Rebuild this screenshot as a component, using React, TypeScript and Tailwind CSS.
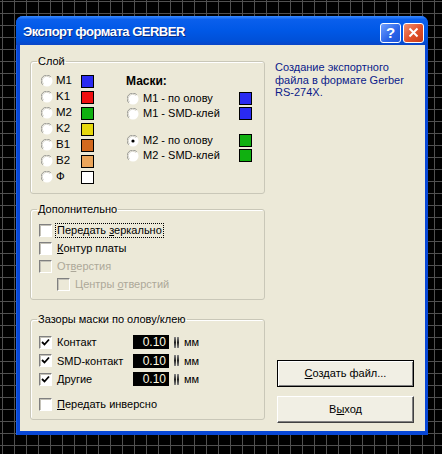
import type { ReactNode } from 'react';

const FONT = "font-['Liberation_Sans',Arial,sans-serif]";

const LAYERS = [
  { name: 'M1', color: 'bg-[#2a2af2]' },
  { name: 'K1', color: 'bg-[#f01010]' },
  { name: 'M2', color: 'bg-[#10b010]' },
  { name: 'K2', color: 'bg-[#e6d80c]' },
  { name: 'B1', color: 'bg-[#d2691e]' },
  { name: 'B2', color: 'bg-[#eba55a]' },
  { name: 'Ф', color: 'bg-white' },
];

const CLEARANCES = ['Контакт', 'SMD-контакт', 'Другие'];

function Radio({ checked = false }: { checked?: boolean }) {
  return (
    <svg width="12" height="12" viewBox="0 0 12 12" className="shrink-0">
      <circle cx="6" cy="6" r="5.5" fill="#ffffff" />
      <path d="M1.8 9.8 A5.2 5.2 0 0 1 9.8 1.8" stroke="#9a9a94" strokeWidth="1" fill="none" />
      <path d="M2.6 8.8 A4.2 4.2 0 0 1 8.8 2.6" stroke="#d8d6cc" strokeWidth="1" fill="none" />
      {checked && <circle cx="6" cy="6" r="1.6" fill="#000000" />}
    </svg>
  );
}

function Checkbox({ checked = false, disabled = false }: { checked?: boolean; disabled?: boolean }) {
  return (
    <div
      className={`w-[13px] h-[13px] shrink-0 border border-t-[#808080] border-l-[#808080] border-r-white border-b-white shadow-[inset_1px_1px_0_#c4c2b8] flex items-center justify-center ${
        disabled ? 'bg-[#ece9d8]' : 'bg-white'
      }`}
    >
      {checked && (
        <svg width="9" height="9" viewBox="0 0 9 9">
          <path d="M1 4 L3.5 6.5 L8 1.5" stroke="#000" strokeWidth="1.8" fill="none" />
        </svg>
      )}
    </div>
  );
}

// groupbox: padding goes on the inner div so the legend stays put
function Group({
  title,
  className = '',
  inner = '',
  children,
}: {
  title: string;
  className?: string;
  inner?: string;
  children: ReactNode;
}) {
  return (
    <fieldset className={`border border-[#c9c7b8] rounded-[3px] shadow-[inset_1px_1px_0_#fff] ${className}`}>
      <legend className="ml-[6px] px-[1px] leading-[13px]">{title}</legend>
      <div className={inner}>{children}</div>
    </fieldset>
  );
}

function Spinner() {
  return (
    <div className="flex gap-[1px] ml-[5px]">
      <div className="w-[2px] h-[11px] bg-[linear-gradient(to_bottom,#888,#222,#888)]" />
      <div className="w-[2px] h-[11px] bg-[linear-gradient(to_bottom,#888,#222,#888)]" />
    </div>
  );
}

const MASKS_1 = [
  { t: 'M1 - по олову', c: 'bg-[#2a2af2]', on: false },
  { t: 'M1 - SMD-клей', c: 'bg-[#2a2af2]', on: false },
];
const MASKS_2 = [
  { t: 'M2 - по олову', c: 'bg-[#10b010]', on: true },
  { t: 'M2 - SMD-клей', c: 'bg-[#10b010]', on: false },
];

function MaskRow({ t, c, on }: { t: string; c: string; on: boolean }) {
  return (
    <div className="h-[15px] flex items-center pl-[1px]">
      <Radio checked={on} />
      <span className="ml-[4px] w-[96px] whitespace-nowrap">{t}</span>
      <div className={`w-[13px] h-[13px] border border-black ${c}`} />
    </div>
  );
}

export default function App() {
  return (
    <div
      className={`w-[442px] h-[454px] overflow-hidden bg-black bg-[linear-gradient(to_right,#505050_1px,transparent_1px),linear-gradient(to_bottom,#505050_1px,transparent_1px)] bg-[size:12px_12px] bg-[position:2px_1px] pt-[16px] pl-[16px] ${FONT}`}
    >
      <div className="w-[412px] h-[419px] rounded-t-[7px] bg-[#0847d6] flex flex-col shadow-[inset_1px_0_0_#1a5ee8]">
        {/* title bar */}
        <div className="h-[29px] rounded-t-[7px] bg-[linear-gradient(to_bottom,#3b8cff_0%,#0a5fec_12%,#0058e6_50%,#0050d8_85%,#0a46c8_100%)] flex items-center pl-[7px] pr-[4px]">
          <span className="text-white font-bold text-[13px] tracking-[-0.5px] leading-none [text-shadow:1px_1px_0_#0a2a80] flex-1 mt-[2px]">
            Экспорт формата GERBER
          </span>
          <div className="flex gap-[2px] mt-[4px]">
            <div className="w-[21px] h-[20px] rounded-[3px] border border-white bg-[linear-gradient(135deg,#6fa0ff,#2a63e8_60%,#1e55d8)] flex items-center justify-center text-white font-bold text-[15px] leading-none">
              ?
            </div>
            <div className="w-[21px] h-[20px] rounded-[3px] border border-white bg-[linear-gradient(135deg,#f09070,#e0502a_55%,#c83c18)] flex items-center justify-center">
              <svg width="11" height="11" viewBox="0 0 11 11">
                <path d="M1.5 1.5 L9.5 9.5 M9.5 1.5 L1.5 9.5" stroke="#fff" strokeWidth="2" />
              </svg>
            </div>
          </div>
        </div>

        {/* body */}
        <div className="flex-1 ml-[4px] mr-[3px] mb-[4px] bg-[#ece9d8] flex text-[11px] text-black">
          <div className="w-[235px] shrink-0 ml-[10px] pt-[10px] flex flex-col">
            <Group title="Слой" inner="flex pl-[10px] pt-[5px] pb-[8px]">
              <div className="w-[85px] flex flex-col">
                {LAYERS.map((l) => (
                  <div key={l.name} className="h-[16px] flex items-center">
                    <Radio />
                    <span className="ml-[3px] w-[25px] text-[11.5px]">{l.name}</span>
                    <div className={`w-[13px] h-[13px] border border-black ${l.color}`} />
                  </div>
                ))}
              </div>
              <div className="flex flex-col">
                <div className="h-[16px] flex items-center font-bold text-[12px]">Маски:</div>
                <div className="mt-[2px]">
                  {MASKS_1.map((m) => (
                    <MaskRow key={m.t} {...m} />
                  ))}
                </div>
                <div className="mt-[12px]">
                  {MASKS_2.map((m) => (
                    <MaskRow key={m.t} {...m} />
                  ))}
                </div>
              </div>
            </Group>

            <Group title="Дополнительно" className="mt-[9px]" inner="pl-[8px] pt-[5px] pb-[6px]">
              <div className="h-[18px] flex items-center">
                <Checkbox />
                <span className="ml-[4px] px-[1px] outline outline-1 outline-dotted outline-black leading-[13px]">
                  Передать <u>з</u>еркально
                </span>
              </div>
              <div className="h-[18px] flex items-center">
                <Checkbox />
                <span className="ml-[5px]">
                  <u>К</u>онтур платы
                </span>
              </div>
              <div className="h-[18px] flex items-center text-[#aca899]">
                <Checkbox disabled />
                <span className="ml-[5px]">
                  От<u>в</u>ерстия
                </span>
              </div>
              <div className="h-[18px] flex items-center text-[#aca899] ml-[18px]">
                <Checkbox disabled />
                <span className="ml-[5px]">
                  Центры <u>о</u>тверстий
                </span>
              </div>
            </Group>

            <Group title="Зазоры маски по олову/клею" className="mt-[13px]" inner="pl-[8px] pt-[7px] pb-[5px]">
              {CLEARANCES.map((c) => (
                <div key={c} className="h-[18.5px] flex items-center">
                  <Checkbox checked />
                  <span className="ml-[5px] w-[76px]">{c}</span>
                  <div className="w-[36px] h-[14px] bg-black text-[#fffbe0] text-[12px] leading-[14px] text-right pr-[3px]">
                    0.10
                  </div>
                  <Spinner />
                  <span className="ml-[5px]">мм</span>
                </div>
              ))}
              <div className="h-[18px] mt-[7px] flex items-center">
                <Checkbox />
                <span className="ml-[5px]">
                  <u>П</u>ередать инверсно
                </span>
              </div>
            </Group>
          </div>

          <div className="flex-1 min-w-0 flex flex-col pl-[10px] pr-[11px] pt-[16px] pb-[8px]">
            <p className="text-[#0a1a8a] leading-[12.5px] whitespace-nowrap">
              Создание экспортного
              <br />
              файла в формате Gerber
              <br />
              RS-274X.
            </p>
            <div className="mt-auto ml-[2px] flex flex-col gap-[9px]">
              <button className="h-[27px] border border-black bg-[#f1efe4] shadow-[inset_1px_1px_0_#fff,inset_-1px_-1px_0_#808080]">
                <u>С</u>оздать файл...
              </button>
              <button className="h-[27px] border border-t-white border-l-white border-r-[#404040] border-b-[#404040] bg-[#f1efe4] shadow-[inset_-1px_-1px_0_#808080]">
                В<u>ы</u>ход
              </button>
            </div>
          </div>
        </div>
      </div>
    </div>
  );
}
